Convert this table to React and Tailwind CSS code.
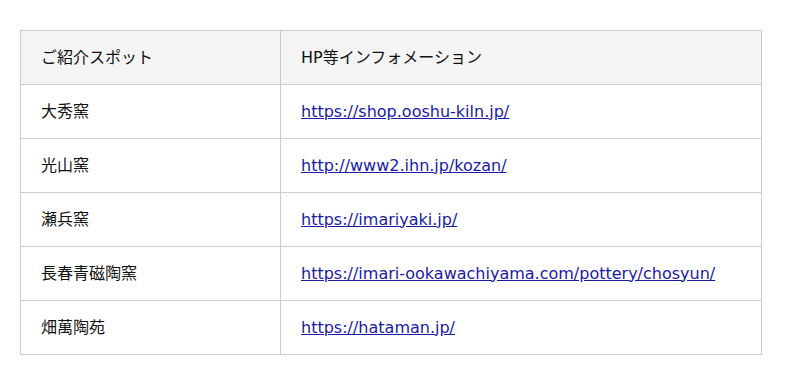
export default function App() {
  const rows = [
    ["大秀窯", "https://shop.ooshu-kiln.jp/"],
    ["光山窯", "http://www2.ihn.jp/kozan/"],
    ["瀬兵窯", "https://imariyaki.jp/"],
    ["長春青磁陶窯", "https://imari-ookawachiyama.com/pottery/chosyun/"],
    ["畑萬陶苑", "https://hataman.jp/"],
  ];
  return (
    <div className="w-[800px] h-[385px] bg-white pt-[30px] pl-[20px]" style={{ fontFamily: '"DejaVu Sans", "Noto Sans CJK JP", sans-serif' }}>
      <table className="w-[742px] border-collapse border border-[#dddddd] text-[16px] text-[#111111]">
        <thead>
          <tr className="bg-[#f4f4f4] h-[54px]">
            <th className="w-[260px] border border-[#cccccc] px-[20px] text-left font-normal">ご紹介スポット</th>
            <th className="border border-[#cccccc] px-[20px] text-left font-normal">HP等インフォメーション</th>
          </tr>
        </thead>
        <tbody>
          {rows.map(([name, url]) => (
            <tr key={name} className="h-[54px]">
              <td className="border border-[#cccccc] px-[20px]">{name}</td>
              <td className="border border-[#cccccc] px-[20px]">
                <a href="#" className="text-[#1a1aa6] underline">{url}</a>
              </td>
            </tr>
          ))}
        </tbody>
      </table>
    </div>
  );
}
